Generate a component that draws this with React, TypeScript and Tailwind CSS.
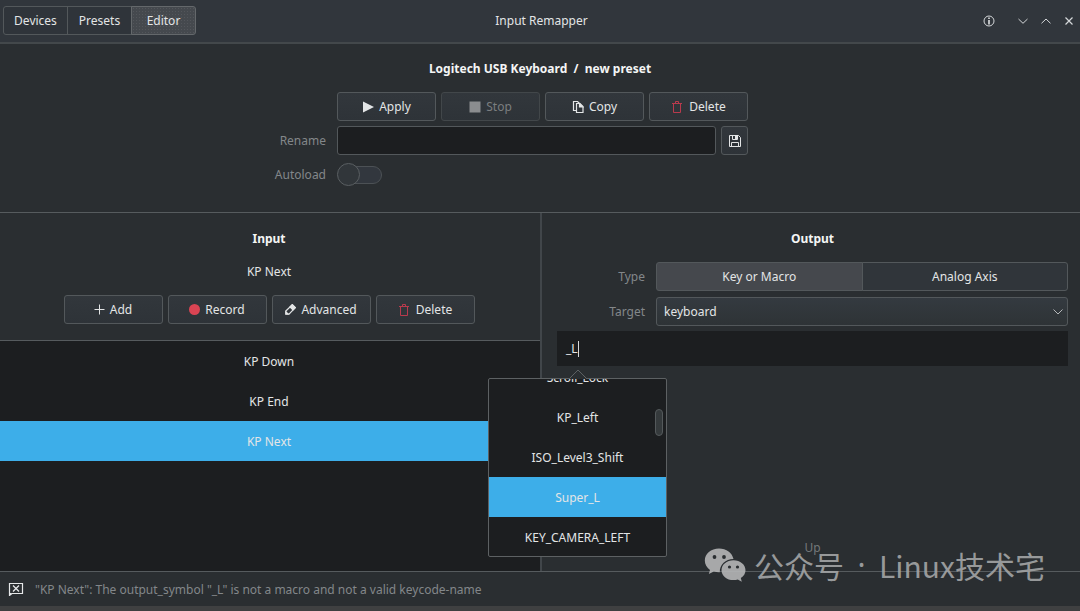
import { useState, type ReactNode } from "react";

const buttonBase =
  "flex h-[29px] items-center justify-center rounded-[3px] border border-[#53585b] bg-linear-to-b from-[#32373c] to-[#2e3338]";

function ActionButton({
  icon,
  label,
  disabled = false,
}: {
  icon: ReactNode;
  label: string;
  disabled?: boolean;
}) {
  return (
    <button
      type="button"
      disabled={disabled}
      className={`${buttonBase} gap-[5px] disabled:border-[#42474a] disabled:text-[#7b7e80]`}
    >
      {icon}
      <span>{label}</span>
    </button>
  );
}

function PlayIcon() {
  return (
    <svg className="size-[12px]" viewBox="0 0 12 12" fill="currentColor" aria-hidden="true">
      <path d="M1 .5 12 6 1 11.5Z" />
    </svg>
  );
}

function StopIcon() {
  return (
    <svg className="size-[12px]" viewBox="0 0 12 12" fill="#8b8d8f" aria-hidden="true">
      <path d="M.5 .5h11v11H.5Z" />
    </svg>
  );
}

function CopyIcon() {
  return (
    <svg className="size-[12px]" viewBox="0 0 12 12" fill="none" stroke="currentColor" strokeWidth="1.200" aria-hidden="true">
      <path d="M4 9.500H1.500v-9h4l1.500 1.500" />
      <path d="M4.500 2.500h3.500l3 3v6h-6.500Z" />
      <path d="M7.500 2.500v3.500h3.500Z" fill="currentColor" />
    </svg>
  );
}

function TrashIcon() {
  return (
    <svg className="mr-[1px] size-[12px]" viewBox="0 0 12 12" fill="none" stroke="#b83a4d" aria-hidden="true">
      <path d="M1 2.5h10M4.5 2.5v-2h3v2M2.5 3v8.5h7V3" />
    </svg>
  );
}

function SaveIcon() {
  return (
    <svg className="size-[12px]" viewBox="0 0 12 12" fill="none" stroke="currentColor" aria-hidden="true">
      <path d="M.5 .5h9l2 2v9H.5Z" />
      <path d="M3.5 .5v4h5v-4M2.5 11.5v-4h7v4" />
      <path d="M6 1h2v3H6Z" fill="currentColor" stroke="none" />
    </svg>
  );
}

function PlusIcon() {
  return (
    <svg className="size-[11px]" viewBox="0 0 11 11" fill="none" stroke="currentColor" aria-hidden="true">
      <path d="M5.5 .5v10M.5 5.5h10" />
    </svg>
  );
}

function RecordIcon() {
  return (
    <svg className="size-[11px]" viewBox="0 0 11 11" aria-hidden="true">
      <circle cx="5.5" cy="5.5" r="5.5" fill="#da4453" />
    </svg>
  );
}

function PencilIcon() {
  return (
    <svg className="size-[11px]" viewBox="0 0 11 11" fill="none" stroke="currentColor" strokeWidth="1.200" aria-hidden="true">
      <path d="M.8 10.2V7L7.3.7l3 3L4 10.2Z" />
      <path d="M5 3 7.3.7l3 3L8 6Z" fill="currentColor" />
      <path d="M1 10V8l2 2Z" fill="currentColor" />
    </svg>
  );
}

function WindowControls() {
  return (
    <div className="flex items-center justify-end pr-[5px] text-[#d5d8da]">
      <button type="button" aria-label="About" className="mr-[22px]">
        <svg className="size-[12px]" viewBox="0 0 12 12" fill="none" stroke="currentColor">
          <circle cx="6" cy="6" r="5" />
          <path d="M6 2.500v1.500M6 5v4.500" strokeWidth="1.700" />
        </svg>
      </button>
      <button type="button" aria-label="Minimize" className="mr-[11px]">
        <svg className="size-[12px]" viewBox="0 0 12 12" fill="none" stroke="currentColor">
          <path d="M1.500 4 6 8.300 10.500 4" />
        </svg>
      </button>
      <button type="button" aria-label="Maximize" className="mr-[11px]">
        <svg className="size-[12px]" viewBox="0 0 12 12" fill="none" stroke="currentColor">
          <path d="M1.500 8.300 6 4l4.500 4.300" />
        </svg>
      </button>
      <button type="button" aria-label="Close">
        <svg className="size-[12px]" viewBox="0 0 12 12" fill="none" stroke="currentColor" strokeWidth="1.200">
          <path d="m2.500 2.500 7 7M9.500 2.500l-7 7" />
        </svg>
      </button>
    </div>
  );
}

function Header() {
  const [tab, setTab] = useState("Editor");
  return (
    <header className="grid grid-cols-[1fr_auto_1fr] items-center border-b-2 border-[#43484b] bg-[#31363c] pt-[6px] pb-[7px] pl-[3px]">
      <nav className="flex">
        {["Devices", "Presets", "Editor"].map((name) => (
          <button
            key={name}
            type="button"
            aria-pressed={tab === name}
            onClick={() => setTab(name)}
            className="-ml-px h-[29px] w-[65px] border border-[#53585b] bg-[#2f343a] first:ml-0 first:rounded-l-[3px] last:rounded-r-[3px] aria-pressed:border-[#64686b] aria-pressed:bg-[#45494e] aria-pressed:bg-[radial-gradient(#53565b_1px,transparent_1px)] aria-pressed:bg-size-[3px_3px]"
          >
            {name}
          </button>
        ))}
      </nav>
      <h1>Input Remapper</h1>
      <WindowControls />
    </header>
  );
}

function PresetForm() {
  return (
    <section className="border-b border-[#565b5e] pt-[14px] pb-[26px]">
      <h2 className="text-center font-bold whitespace-pre text-[#f4f5f5]">
        Logitech USB Keyboard  /  new preset
      </h2>
      <div className="mt-[13px] grid grid-cols-[1fr_411px_1fr] items-center gap-x-[11px] gap-y-[5px] pl-[5px]">
        <div className="col-start-2 grid grid-cols-4 gap-[5px]">
          <ActionButton icon={<PlayIcon />} label="Apply" />
          <ActionButton icon={<StopIcon />} label="Stop" disabled />
          <ActionButton icon={<CopyIcon />} label="Copy" />
          <ActionButton icon={<TrashIcon />} label="Delete" />
        </div>
        <label htmlFor="rename" className="col-start-1 text-right text-[#83878a]">
          Rename
        </label>
        <div className="flex gap-[5px]">
          <input
            id="rename"
            type="text"
            className="h-[29px] min-w-0 flex-1 rounded-[3px] border border-[#53585b] bg-[#1c1e20] px-2 outline-none"
          />
          <button type="button" aria-label="Save" className={`${buttonBase} w-[27px]`}>
            <SaveIcon />
          </button>
        </div>
        <label htmlFor="autoload" className="col-start-1 mt-[3px] text-right text-[#83878a]">
          Autoload
        </label>
        <label className="relative mt-[3px] flex h-[23px] w-[45px] items-center">
          <input id="autoload" type="checkbox" role="switch" className="peer sr-only" />
          <span className="ml-[4px] h-[18px] flex-1 rounded-full border border-[#4c5155] bg-[#32373e]" />
          <span className="absolute top-0 left-0 size-[23px] rounded-full border border-[#5a5f62] bg-[#31363a] peer-checked:left-[22px]" />
        </label>
      </div>
    </section>
  );
}

function InputPanel() {
  const [selected, setSelected] = useState("KP Next");
  return (
    <section className="flex flex-col">
      <div className="border-b border-[#565b5e] pt-[15px] pr-[2px] pb-[16px] text-center">
        <h2 className="font-bold text-[#f4f5f5]">Input</h2>
        <p className="mt-[12px]">{selected}</p>
        <div className="mx-auto mt-[13px] grid w-[411px] grid-cols-4 gap-[5px]">
          <ActionButton icon={<PlusIcon />} label="Add" />
          <ActionButton icon={<RecordIcon />} label="Record" />
          <ActionButton icon={<PencilIcon />} label="Advanced" />
          <ActionButton icon={<TrashIcon />} label="Delete" />
        </div>
      </div>
      <div className="flex flex-1 flex-col bg-[#1c1e20]">
        {["KP Down", "KP End", "KP Next"].map((name) => (
          <button
            key={name}
            type="button"
            aria-pressed={selected === name}
            onClick={() => setSelected(name)}
            className="h-[40px] pr-[2px] aria-pressed:bg-[#3daee9]"
          >
            {name}
          </button>
        ))}
      </div>
    </section>
  );
}

function CompletionPopup() {
  const [active, setActive] = useState("Super_L");
  const names = ["Scroll_Lock", "KP_Left", "ISO_Level3_Shift", "Super_L", "KEY_CAMERA_LEFT"];
  return (
    <div className="absolute top-[47px] -left-[69px] z-10 w-[179px] rounded-[2px] border border-[#5d6163] bg-[#1c1e20]">
      <svg
        className="absolute -top-[10px] left-1/2 h-[10px] w-[20px] -translate-x-1/2"
        viewBox="0 0 20 10"
        aria-hidden="true"
      >
        <path d="M1 10 10 1l9 9" fill="#2a2e31" stroke="#5d6163" />
      </svg>
      <div className="h-[177px] overflow-hidden">
        <ul role="listbox" aria-label="Completions" className="-mt-[22px]">
          {names.map((name) => (
            <li
              key={name}
              role="option"
              aria-selected={active === name}
              onClick={() => setActive(name)}
              className="flex h-[40px] items-center justify-center aria-selected:bg-[#3daee9]"
            >
              {name}
            </li>
          ))}
        </ul>
      </div>
      <span className="absolute top-[30px] right-[3px] h-[27px] w-[8px] rounded-full border border-[#54595b] bg-[#353a3c]" />
    </div>
  );
}

function OutputPanel() {
  const [type, setType] = useState("Key or Macro");
  return (
    <section className="flex flex-col border-l-2 border-[#41464a] pt-[15px] pr-[12px] pb-[13px] pl-[15px]">
      <h2 className="text-center font-bold text-[#f4f5f5]">Output</h2>
      <div className="mt-[13px] grid grid-cols-[88px_1fr] items-center gap-x-[11px] gap-y-[6px]">
        <span id="type-label" className="text-right text-[#83878a]">
          Type
        </span>
        <div role="group" aria-labelledby="type-label" className="flex">
          {["Key or Macro", "Analog Axis"].map((name) => (
            <button
              key={name}
              type="button"
              aria-pressed={type === name}
              onClick={() => setType(name)}
              className="-ml-px h-[29px] flex-1 border border-[#53585b] bg-[#30353a] first:ml-0 first:rounded-l-[3px] last:rounded-r-[3px] aria-pressed:bg-[#45484d]"
            >
              {name}
            </button>
          ))}
        </div>
        <label htmlFor="target" className="text-right text-[#83878a]">
          Target
        </label>
        <div className="relative">
          <select
            id="target"
            className="block h-[29px] w-full appearance-none rounded-[3px] border border-[#53585b] bg-linear-to-b from-[#343a40] to-[#2e3336] px-[7px] outline-none"
          >
            <option>keyboard</option>
            <option>mouse</option>
            <option>gamepad</option>
          </select>
          <svg
            className="pointer-events-none absolute top-[9px] right-[4px] size-[12px]"
            viewBox="0 0 12 12"
            fill="none"
            stroke="#b4b7b9"
            aria-hidden="true"
          >
            <path d="M1.500 3.500 6 8l4.500-4.500" />
          </svg>
        </div>
      </div>
      <div className="relative mt-[5px]">
        <textarea
          aria-label="Output symbol"
          defaultValue="_L"
          rows={1}
          spellCheck={false}
          className="block h-[35px] w-full resize-none bg-[#1c1e20] px-[9px] py-[7px] caret-transparent outline-none"
        />
        <span className="absolute top-[10px] left-[21px] h-[16px] w-px bg-[#d8dadb]" />
        <CompletionPopup />
      </div>
      <p className="mt-auto text-center text-[#74787a]">Up</p>
    </section>
  );
}

function StatusBar() {
  return (
    <footer className="flex h-[35px] items-center gap-[11px] border-t border-[#565b5e] pl-[8px] text-[#83878a]">
      <svg className="h-[14px] w-[16px]" viewBox="0 0 16 14" fill="none" stroke="#e6e8e9" aria-hidden="true">
        <path d="M1.500 1.500h13v10H4L1.500 13.500Z" strokeWidth="1.200" />
        <path d="M1 11v3l3-3Z" fill="#e6e8e9" stroke="none" />
        <path d="m5 3.500 6 6M11 3.500l-6 6" strokeWidth="1.300" />
      </svg>
      <p>"KP Next": The output_symbol "_L" is not a macro and not a valid keycode-name</p>
    </footer>
  );
}

function AccountMark() {
  return (
    <div className="pointer-events-none absolute right-[35px] bottom-[23px] z-20 flex items-center gap-[8px] text-[#a3a5a6] opacity-90">
      <svg className="h-[34px] w-[42px]" viewBox="0 0 42 34" aria-hidden="true">
        <path
          fill="#b5b6b7"
          d="M15 .5C7 .5.800 5.800.800 12.500c0 3.900 2 7.200 5.200 9.400L4.800 26l5-2.500c1.800.600 3.900.900 6 .8-.3-7.500 6-13.300 13.700-13.200C28.300 5 22.400.5 15 .5Z"
        />
        <path
          fill="#b5b6b7"
          d="M29.500 12.300c-6.800 0-12 4.400-12 9.900s5.200 9.900 12 9.900c1.500 0 3-.2 4.300-.6l4 2.200-1-3.600c2.900-1.900 4.700-4.700 4.700-7.900 0-5.500-5.200-9.900-12-9.900Z"
        />
        <g fill="#2a2e31">
          <circle cx="10.500" cy="9" r="1.900" />
          <circle cx="20" cy="9" r="1.900" />
          <circle cx="25.500" cy="19" r="1.600" />
          <circle cx="33.500" cy="19" r="1.600" />
        </g>
      </svg>
      <p className="flex font-['Noto_Sans_CJK_SC',sans-serif] text-[30px] leading-[36px]">
        <span>公众号</span>
        <span className="w-[35px] text-center font-['Noto_Sans']">·</span>
        <span>Linux技术宅</span>
      </p>
    </div>
  );
}

export default function App() {
  return (
    <div className="relative flex min-h-screen flex-col border-b-[5px] border-[#3f4041] bg-[#2a2e31] font-['Noto_Sans','Noto_Sans_CJK_SC',sans-serif] text-[12px] leading-[21px] text-[#e3e5e6]">
      <Header />
      <PresetForm />
      <main className="grid flex-1 grid-cols-2">
        <InputPanel />
        <OutputPanel />
      </main>
      <StatusBar />
      <AccountMark />
    </div>
  );
}
